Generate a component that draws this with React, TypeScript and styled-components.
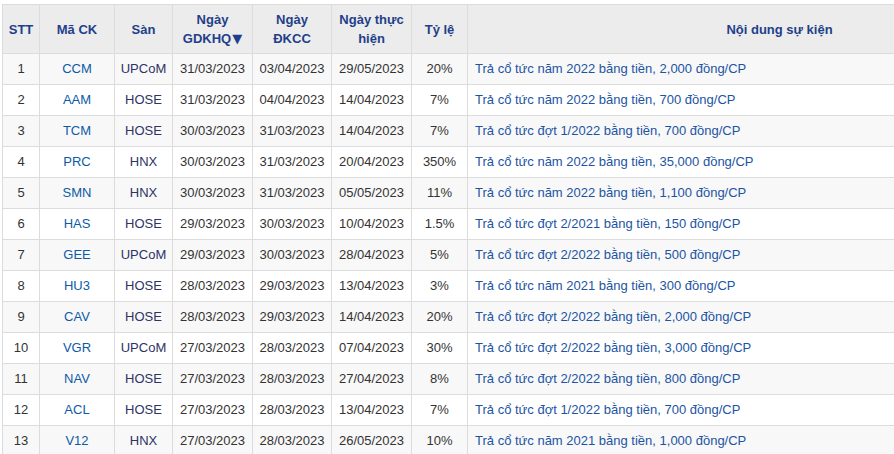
import React from "react";
import styled, { createGlobalStyle } from "styled-components";

const Global = createGlobalStyle`
  html, body { margin: 0; padding: 0; background: #fff; overflow: hidden; }
  body { font-family: "Liberation Sans", Arial, sans-serif; font-size: 13px; }
`;

const Wrap = styled.div`
  padding: 4px 0 0 2px;
  width: 1100px;
`;

const Table = styled.table`
  border-collapse: collapse;
  table-layout: fixed;
  width: 1089px;
  font-family: "Liberation Sans", Arial, sans-serif;
  font-size: 13px;
`;

const Th = styled.th`
  background: #ececec;
  border: 1px solid #dcdcdc;
  color: #1f3f8a;
  font-weight: bold;
  line-height: 19px;
  padding: 5px 4px 5px;
  height: 38px;
  text-align: center;
  vertical-align: middle;
`;

const Caret = styled.span`
  font-family: "DejaVu Sans", sans-serif;
  font-size: 13px;
  line-height: 0;
  margin-left: 1px;
`;

const Tr = styled.tr<{ $odd: boolean }>`
  background: ${(p) => (p.$odd ? "#f8f8f8" : "#ffffff")};
`;

type Tone = "plain" | "code" | "exch" | "text";

const toneColor: Record<Tone, string> = {
  plain: "#333333",
  code: "#0d5aa7",
  exch: "#2e3366",
  text: "#1c54a3",
};

const Td = styled.td<{ $tone: Tone; $left?: boolean }>`
  border: 1px solid #dcdcdc;
  color: ${(p) => toneColor[p.$tone]};
  line-height: 20px;
  padding: 5px 4px;
  text-align: ${(p) => (p.$left ? "left" : "center")};
  white-space: nowrap;
  overflow: hidden;
  padding-left: ${(p) => (p.$left ? "7px" : "4px")};
`;

const rows: [string, string, string, string, string, string, string][] = [
  ["CCM", "UPCoM", "31/03/2023", "03/04/2023", "29/05/2023", "20%", "Trả cổ tức năm 2022 bằng tiền, 2,000 đồng/CP"],
  ["AAM", "HOSE", "31/03/2023", "04/04/2023", "14/04/2023", "7%", "Trả cổ tức năm 2022 bằng tiền, 700 đồng/CP"],
  ["TCM", "HOSE", "30/03/2023", "31/03/2023", "14/04/2023", "7%", "Trả cổ tức đợt 1/2022 bằng tiền, 700 đồng/CP"],
  ["PRC", "HNX", "30/03/2023", "31/03/2023", "20/04/2023", "350%", "Trả cổ tức năm 2022 bằng tiền, 35,000 đồng/CP"],
  ["SMN", "HNX", "30/03/2023", "31/03/2023", "05/05/2023", "11%", "Trả cổ tức năm 2022 bằng tiền, 1,100 đồng/CP"],
  ["HAS", "HOSE", "29/03/2023", "30/03/2023", "10/04/2023", "1.5%", "Trả cổ tức đợt 2/2021 bằng tiền, 150 đồng/CP"],
  ["GEE", "UPCoM", "29/03/2023", "30/03/2023", "28/04/2023", "5%", "Trả cổ tức đợt 2/2022 bằng tiền, 500 đồng/CP"],
  ["HU3", "HOSE", "28/03/2023", "29/03/2023", "13/04/2023", "3%", "Trả cổ tức năm 2021 bằng tiền, 300 đồng/CP"],
  ["CAV", "HOSE", "28/03/2023", "29/03/2023", "14/04/2023", "20%", "Trả cổ tức đợt 2/2022 bằng tiền, 2,000 đồng/CP"],
  ["VGR", "UPCoM", "27/03/2023", "28/03/2023", "07/04/2023", "30%", "Trả cổ tức đợt 2/2022 bằng tiền, 3,000 đồng/CP"],
  ["NAV", "HOSE", "27/03/2023", "28/03/2023", "27/04/2023", "8%", "Trả cổ tức đợt 2/2022 bằng tiền, 800 đồng/CP"],
  ["ACL", "HOSE", "27/03/2023", "28/03/2023", "13/04/2023", "7%", "Trả cổ tức đợt 1/2022 bằng tiền, 700 đồng/CP"],
  ["V12", "HNX", "27/03/2023", "28/03/2023", "26/05/2023", "10%", "Trả cổ tức năm 2021 bằng tiền, 1,000 đồng/CP"],
];

const widths = [37, 75, 58, 80, 79, 80, 56, 624];

export default function App() {
  return (
    <Wrap>
      <Global />
      <Table>
        <colgroup>
          {widths.map((w, i) => (
            <col key={i} style={{ width: w }} />
          ))}
        </colgroup>
        <thead>
          <tr>
            <Th>STT</Th>
            <Th>Mã CK</Th>
            <Th>Sàn</Th>
            <Th>
              Ngày
              <br />
              GDKHQ<Caret>▼</Caret>
            </Th>
            <Th>
              Ngày
              <br />
              ĐKCC
            </Th>
            <Th>
              Ngày thực
              <br />
              hiện
            </Th>
            <Th>Tỷ lệ</Th>
            <Th>Nội dung sự kiện</Th>
          </tr>
        </thead>
        <tbody>
          {rows.map((r, i) => (
            <Tr key={i} $odd={i % 2 === 0}>
              <Td $tone="plain">{i + 1}</Td>
              <Td $tone="code">{r[0]}</Td>
              <Td $tone="exch">{r[1]}</Td>
              <Td $tone="plain">{r[2]}</Td>
              <Td $tone="plain">{r[3]}</Td>
              <Td $tone="plain">{r[4]}</Td>
              <Td $tone="plain">{r[5]}</Td>
              <Td $tone="text" $left>
                {r[6]}
              </Td>
            </Tr>
          ))}
        </tbody>
      </Table>
    </Wrap>
  );
}
